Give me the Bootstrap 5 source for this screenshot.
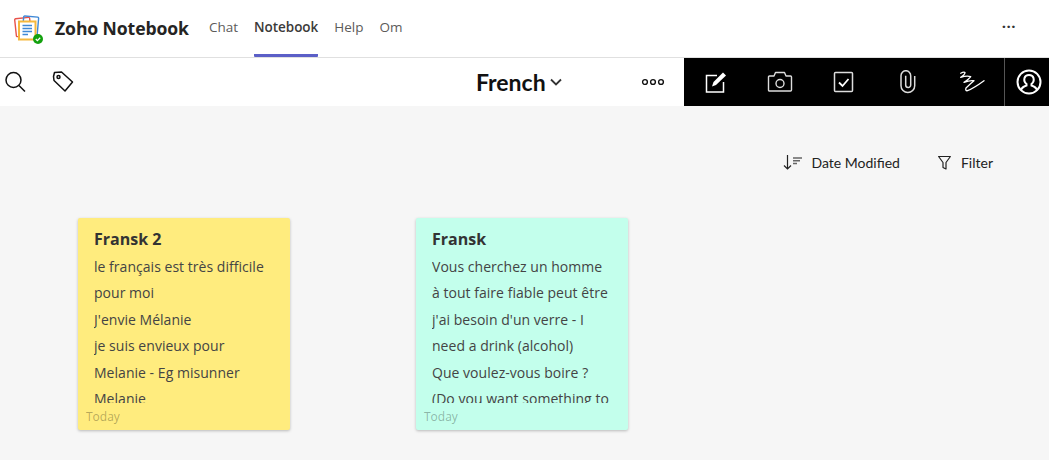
<!DOCTYPE html>
<html lang="en">
<head>
    <meta charset="UTF-8">
    <meta name="viewport" content="width=device-width, initial-scale=1.0">
    <title>Zoho Notebook</title>
    <link href="https://cdn.jsdelivr.net/npm/bootstrap@5.3.0/dist/css/bootstrap.min.css" rel="stylesheet">
    <style>
        html, body { height: 100%; }
        body { background: #f6f6f6; font-family: "Open Sans", "Noto Sans", sans-serif; overflow: hidden; }
        .app-head { height: 58px; background: #fff; border-bottom: 1px solid #e0e0e0; padding-left: 14px; padding-right: 33px; }
        .app-logo { width: 30px; height: 30px; margin-right: 11px; }
        .app-name { font-size: 17.6px; font-weight: 700; color: #252423; width: 154px; letter-spacing: -.1px; white-space: nowrap; }
        .tab-link { height: 57px; line-height: 55px; font-size: 13.5px; color: #5c5b5a; margin-right: 16px; border-bottom: 3px solid transparent; text-decoration: none; }
        .tab-on { color: #3b3a39; font-weight: 600; letter-spacing: -.06px; border-bottom-color: #5b5fc7; border-radius: 0 0 1px 1px; }
        .app-dots { font-size: 15px; line-height: 1; color: #333; font-weight: 700; letter-spacing: .5px; margin-top: -13px; }
        .tool-row { height: 48px; background: #fff; }
        .tool-left { width: 476px; padding-left: 4px; gap: 26px; }
        .tool-mid { width: 208px; font-family: Lato, sans-serif; color: #111; }
        .book-name { font-size: 23px; font-weight: 700; line-height: 1; width: 165px; gap: 4px; }
        .tool-black { flex: 1; background: #000; }
        .black-icon { width: 64px; }
        .user-cell { margin-left: auto; width: 45px; height: 48px; padding-left: 4px; border-left: 1px solid #555; }
        .sort-row { padding: 46px 56px 0 0; height: 112px; font-family: Lato, sans-serif; font-size: 14px; color: #222; }
        .sort-item { gap: 9px; }
        .sort-filter { gap: 10px; margin-left: 38px; }
        .note-row { padding-left: 78px; gap: 126px; }
        .note-box { position: relative; width: 212px; height: 212px; padding: 9px 16px 0; color: #444; border-radius: 2px; box-shadow: 0 1px 3px rgba(0,0,0,.25); }
        .note-yellow { background: #ffec7e; }
        .note-mint { background: #c3ffec; }
        .note-title { font-size: 16px; font-weight: 700; line-height: 24px; margin-bottom: 2.5px; color: #333; }
        .note-text { height: 149px; overflow: hidden; font-size: 14px; letter-spacing: .03px; line-height: 26.5px; white-space: nowrap; }
        .note-date { position: absolute; left: 8px; bottom: 5px; font-size: 12px; line-height: 16px; color: rgba(0,0,0,.3); }
    </style>
</head>
<body>
    <!-- Teams header -->
    <div class="app-head d-flex align-items-center">
        <svg class="app-logo flex-shrink-0" viewBox="0 0 30 30" fill="none">
            <rect x="1.5" y="4" width="15" height="18" rx="1" stroke="#e8524a" stroke-width="1.4" transform="rotate(-6 9 13)"/>
            <rect x="9" y="2.5" width="15" height="18" rx="1" stroke="#3f88d6" stroke-width="1.4" transform="rotate(5 16 11)"/>
            <rect x="5" y="7.500" width="16.500" height="18" fill="#fff" stroke="#f5b83d" stroke-width="2"/>
            <path d="M8.500 11.500h9.500M8.500 14.500h9.500M8.500 17.500h9.500M8.500 20.500h5.500" stroke="#3f88d6" stroke-width="1.600"/>
            <circle cx="24" cy="25" r="5" fill="#13a10e"/>
            <path d="M21.800 25l1.600 1.600 2.800-2.900" stroke="#fff" stroke-width="1.300"/>
        </svg>
        <div class="app-name">Zoho Notebook</div>
        <a class="tab-link" href="#">Chat</a>
        <a class="tab-link tab-on" href="#">Notebook</a>
        <a class="tab-link" href="#">Help</a>
        <a class="tab-link" href="#">Om</a>
        <div class="app-dots ms-auto">...</div>
    </div>

    <!-- Notebook toolbar -->
    <div class="tool-row d-flex">
        <div class="tool-left d-flex align-items-center">
            <svg width="22" height="24" viewBox="0 0 22 24" fill="none" stroke="#111" stroke-width="1.500">
                <circle cx="9.500" cy="10" r="7.500"/><path d="M15 15.500l6 6"/>
            </svg>
            <svg width="22" height="24" viewBox="0 0 22 24" fill="none" stroke="#111" stroke-width="1.500" stroke-linejoin="round">
                <path d="M1.500 6.500l1-4 7-.5 11 10-7.500 9-11-10.500z"/><circle cx="6.500" cy="7" r="1.500"/>
            </svg>
        </div>
        <div class="tool-mid d-flex align-items-center">
            <div class="book-name d-flex align-items-center">French
                <svg width="12" height="8" viewBox="0 0 12 8" fill="none" stroke="#333" stroke-width="1.800"><path d="M1 1.500l5 5 5-5"/></svg>
            </div>
            <svg width="24" height="8" viewBox="0 0 24 8" fill="none" stroke="#111" stroke-width="1.400">
                <circle cx="4" cy="4" r="2.400"/><circle cx="12" cy="4" r="2.400"/><circle cx="20" cy="4" r="2.400"/>
            </svg>
        </div>
        <div class="tool-black d-flex align-items-center text-white">
            <div class="black-icon d-flex justify-content-center">
                <svg width="24" height="24" viewBox="0 0 24 24" fill="none" stroke="#fff" stroke-width="1.500">
                    <path d="M13 5.500H2.500V22h17V12"/><path d="M8 16.500l1.500-4.500L19 2.500l3 3L12 15z" fill="#fff" stroke="none"/>
                </svg>
            </div>
            <div class="black-icon d-flex justify-content-center">
                <svg width="26" height="24" viewBox="0 0 26 24" fill="none" stroke="#ddd" stroke-width="1.400" stroke-linejoin="round">
                    <path d="M1.500 7a1 1 0 0 1 1-1h4.500l1.500-3.500h9L19 6h4.500a1 1 0 0 1 1 1v13a1 1 0 0 1-1 1h-21a1 1 0 0 1-1-1z"/><circle cx="13" cy="13.500" r="4"/>
                </svg>
            </div>
            <div class="black-icon d-flex justify-content-center">
                <svg width="24" height="24" viewBox="0 0 24 24" fill="none" stroke="#ddd" stroke-width="1.500">
                    <rect x="2.500" y="2.500" width="18" height="19" rx="1"/><path d="M7 12.500l3.500 3.500L16.500 9" stroke="#fff" stroke-width="1.800"/>
                </svg>
            </div>
            <div class="black-icon d-flex justify-content-center">
                <svg width="16" height="24" viewBox="0 0 16 24" fill="none" stroke="#ddd" stroke-width="1.500">
                    <path d="M14.700 6v9.700a6.850 6.850 0 0 1-13.700 0V5.700a4.850 5 0 0 1 9.700 0V15a2.500 2.500 0 0 1-5 0V5.700"/>
                </svg>
            </div>
            <div class="black-icon d-flex justify-content-center">
                <svg width="26" height="24" viewBox="0 0 26 24" fill="none" stroke="#fff" stroke-width="1.300" stroke-linecap="round" stroke-linejoin="round">
                    <path d="M1.700 3.300Q5 1.500 6 2.500Q6 4.500 1.700 7.300Q8 5.500 11.700 6.700Q10 9 5 12.300Q11 10 15 10.700Q12 13 7 18Q6 21 8.500 20.700Q15 18 25 10.700"/>
                </svg>
            </div>
            <div class="user-cell d-flex align-items-center justify-content-center">
                <svg width="26" height="26" viewBox="0 0 26 26" fill="none" stroke="#fff" stroke-width="2">
                    <circle cx="13" cy="13" r="11.500"/><path d="M5 21c1-3 4-4 5.500-4.500v-1.500C8.500 13.500 8 11 8.500 9c.7-2.500 3-3 4.500-3s3.800.5 4.500 3c.5 2 0 4.500-2 6v1.500c1.500.5 4.500 1.500 5.500 4.500"/>
                </svg>
            </div>
        </div>
    </div>

    <!-- Sort and filter -->
    <div class="sort-row d-flex justify-content-end">
        <div class="sort-item d-flex align-items-start">
            <svg width="20" height="18" viewBox="0 0 20 18" fill="none" stroke="#222" stroke-width="1.200">
                <path d="M4.500 3v14M1 13.500l3.500 3.500L8 13.500"/>
                <path d="M10 6h9M10 8.800h7M10 11.500h4" stroke="#666" stroke-width="1.500"/>
            </svg>
            <span>Date Modified</span>
        </div>
        <div class="sort-filter d-flex align-items-start">
            <svg width="13" height="18" viewBox="0 0 13 18" fill="none" stroke="#222" stroke-width="1.200" stroke-linejoin="round">
                <path d="M.6 4.500h11.800L8 10.500V17l-3-1.500v-5z"/>
            </svg>
            <span>Filter</span>
        </div>
    </div>

    <!-- Notes -->
    <div class="note-row d-flex">
        <div class="note-box note-yellow">
            <div class="note-title">Fransk 2</div>
            <div class="note-text">
                <div>le français est très difficile</div>
                <div>pour moi</div>
                <div>J'envie Mélanie</div>
                <div>je suis envieux pour</div>
                <div>Melanie - Eg misunner</div>
                <div>Melanie</div>
            </div>
            <div class="note-date">Today</div>
        </div>
        <div class="note-box note-mint">
            <div class="note-title">Fransk</div>
            <div class="note-text">
                <div>Vous cherchez un homme</div>
                <div>à tout faire fiable peut être</div>
                <div>j'ai besoin d'un verre - I</div>
                <div>need a drink (alcohol)</div>
                <div>Que voulez-vous boire ?</div>
                <div>(Do you want something to</div>
            </div>
            <div class="note-date">Today</div>
        </div>
    </div>

    <script src="https://cdn.jsdelivr.net/npm/bootstrap@5.3.0/dist/js/bootstrap.bundle.min.js"></script>
</body>
</html>
